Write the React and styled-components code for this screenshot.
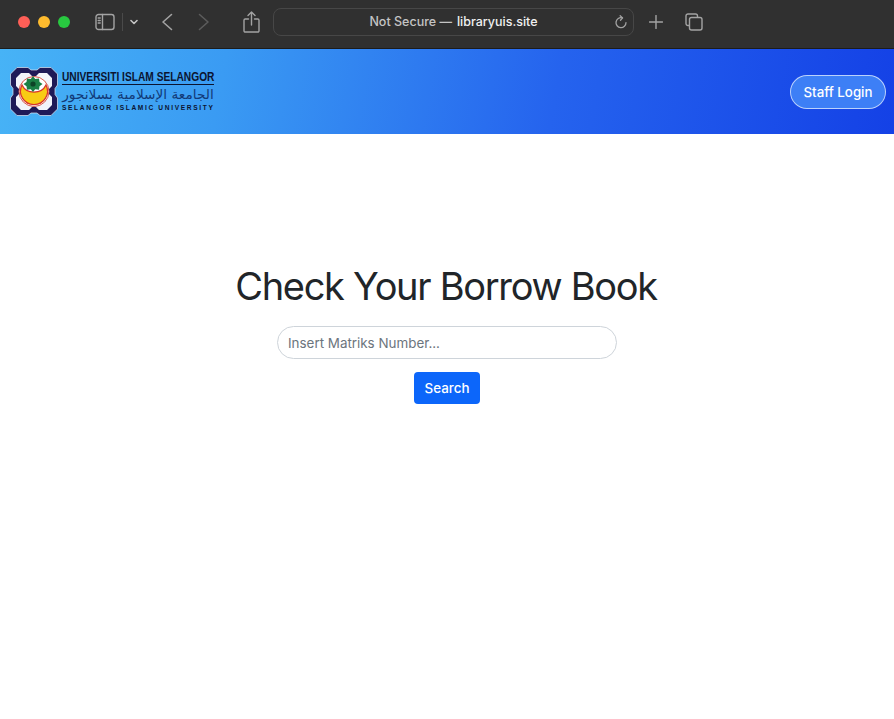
import React from 'react'
import styled, { createGlobalStyle } from 'styled-components'

const GlobalStyle = createGlobalStyle`
  html, body {
    margin: 0;
    padding: 0;
    background: #fff;
    font-family: Inter, "Liberation Sans", sans-serif;
  }
  * {
    box-sizing: border-box;
  }
`

const Page = styled.div`
  width: 894px;
  height: 719px;
  overflow: hidden;
  background: #fff;
`

const Chrome = styled.div`
  display: flex;
  align-items: center;
  height: 49px;
  padding: 0 0 5px 18px;
  background: #303030;
  border-bottom: 1px solid #1c1c1c;
`

const Lights = styled.div`
  display: flex;
  gap: 8px;
  margin-right: 25px;
`

const Light = styled.span`
  width: 12px;
  height: 12px;
  border-radius: 50%;
  background: ${props => props.color};
`

const Divider = styled.span`
  width: 1px;
  height: 18px;
  margin: 0 7px 0 7px;
  background: #4a4a4a;
`

const ChromeIcon = styled.svg`
  display: block;
  flex: none;
  margin-left: ${props => props.$left || 0}px;
  fill: none;
  stroke: ${props => props.$dim ? '#5c5c5c' : '#a3a3a3'};
  stroke-width: 1.4;
  stroke-linecap: round;
  stroke-linejoin: round;
`

const UrlBar = styled.div`
  position: relative;
  display: flex;
  align-items: center;
  justify-content: center;
  width: 361px;
  height: 28px;
  margin-left: 13px;
  border: 1px solid #474747;
  border-radius: 8px;
  font-size: 12.5px;
  font-weight: 500;
  color: #c4c4c4;
`

const Host = styled.span`
  margin-left: 5px;
  color: #f0f0f0;
`

const Reload = styled.svg`
  position: absolute;
  right: 5px;
  top: 6px;
  fill: none;
  stroke: #a3a3a3;
  stroke-width: 1.3;
  stroke-linecap: round;
  stroke-linejoin: round;
`

const Header = styled.header`
  display: flex;
  align-items: center;
  justify-content: space-between;
  height: 85px;
  padding: 0 8px 0 10px;
  background: linear-gradient(100deg, #47b3f6 0%, #3a9bf3 25%, #2563ee 62%, #1441e6 100%);
`

const Logo = styled.div`
  display: flex;
  align-items: center;
  gap: 4px;
`

const LogoText = styled.div`
  display: flex;
  flex-direction: column;
  width: 152px;
  color: #0b1430;
`

const LogoTitle = styled.div`
  height: 13px;
  border-bottom: 1px solid #0b1430;
  font-family: "Liberation Sans", sans-serif;
  font-size: 12.6px;
  line-height: 11px;
  font-weight: 700;
  white-space: nowrap;
`

const LogoTitleText = styled.span`
  display: inline-block;
  transform: scaleX(0.81);
  transform-origin: left center;
`

const LogoArabic = styled.div`
  height: 19px;
  font-family: "DejaVu Sans", sans-serif;
  font-size: 13.7px;
  line-height: 18px;
  color: #123a78;
  text-align: center;
  white-space: nowrap;
`

const LogoEnglish = styled.div`
  font-family: "Liberation Sans", sans-serif;
  font-size: 6.6px;
  line-height: 8px;
  font-weight: 700;
  letter-spacing: 1.66px;
  white-space: nowrap;
`

const LoginButton = styled.button`
  width: 96px;
  height: 34px;
  padding: 0;
  border: 1px solid rgba(255, 255, 255, 0.65);
  border-radius: 17px;
  background: #3d7ff6;
  color: #fff;
  font-family: inherit;
  font-size: 13.3px;
  font-weight: 500;
`

const Main = styled.main`
  display: flex;
  flex-direction: column;
  align-items: center;
  padding-top: 128px;
`

const Title = styled.h1`
  margin: 0 2px 16px 0;
  font-size: 38px;
  line-height: 48px;
  font-weight: 400;
  letter-spacing: -1.3px;
  color: #212529;
`

const SearchInput = styled.input`
  width: 340px;
  height: 33px;
  padding: 0 10px;
  border: 1px solid #ced4da;
  border-radius: 17px;
  outline: none;
  font-family: inherit;
  font-size: 13.4px;
  color: #212529;
  &::placeholder {
    color: #6c757d;
    opacity: 1;
  }
`

const SearchButton = styled.button`
  width: 66px;
  height: 32px;
  margin-top: 13px;
  padding: 0;
  border: none;
  border-radius: 4px;
  background: #0c66fa;
  color: #fff;
  font-family: inherit;
  font-size: 13.4px;
  font-weight: 500;
`

const star = 'M23 9 L25.2 12 L29 11.5 L29.5 15 L32.5 17 L29.5 19.2 L29 22.7 L25.2 22.2 L23 25 L20.8 22.2 L17 22.7 L16.5 19.2 L13.5 17 L16.5 15 L17 11.5 L20.8 12 Z'

const Emblem = () => (
  <svg width="48" height="49" viewBox="0 0 48 49">
    <path
      d="M7 0.5 H18 L21 3 H27 L30 0.5 H41 L47.5 7 V18 L45 21.5 V27.5 L47.5 31 V42 L41 48.5 H30 L27 46 H21 L18 48.5 H7 L0.5 42 V31 L3 27.5 V21.5 L0.5 18 V7 Z"
      fill="#1f1a57"
      stroke="#dfe6f2"
      strokeWidth="0.7"
      strokeLinejoin="round"
    />
    <path
      d="M11 6 H19 L22 9 H26 L29 6 H37 L42 11 V19 L39 22 V27 L42 30 V38 L37 43 H29 L26 40 H22 L19 43 H11 L6 38 V30 L9 27 V22 L6 19 V11 Z"
      fill="#f2f4fa"
    />
    <circle cx="24" cy="24.5" r="15" fill="#ffffff" stroke="#d8574a" strokeWidth="1" />
    <path
      d="M12 18 A13.5 13.5 0 1 0 36 18 A13 11.5 0 0 1 12 18 Z"
      fill="#f8cc14"
      stroke="#d8352b"
      strokeWidth="1.3"
    />
    <path d={star} fill="#1b7f45" />
    <circle cx="23" cy="17" r="2.6" fill="#0d4326" />
  </svg>
)

const App = () => (
  <Page>
    <GlobalStyle />
    <Chrome>
      <Lights>
        <Light color="#fe5f57" />
        <Light color="#febb2e" />
        <Light color="#28c840" />
      </Lights>
      <ChromeIcon width="20" height="18" viewBox="0 0 20 18">
        <rect x="1" y="1.5" width="18" height="15" rx="2.5" />
        <path d="M7.5 1.5V16.5M3.2 5h2M3.2 7.5h2M3.2 10h2" />
      </ChromeIcon>
      <Divider />
      <ChromeIcon width="8" height="6" viewBox="0 0 8 6" style={{ strokeWidth: 1.6, stroke: '#c4c4c4' }}>
        <path d="M1 1.5L4 4.5L7 1.5" />
      </ChromeIcon>
      <ChromeIcon $left={23} width="12" height="18" viewBox="0 0 12 18" style={{ strokeWidth: 1.6 }}>
        <path d="M10.5 1.5L2 9L10.5 16.5" />
      </ChromeIcon>
      <ChromeIcon $left={25} $dim width="12" height="18" viewBox="0 0 12 18" style={{ strokeWidth: 1.6 }}>
        <path d="M1.5 1.5L10 9L1.5 16.5" />
      </ChromeIcon>
      <ChromeIcon $left={33} width="17" height="22" viewBox="0 0 17 22">
        <path d="M5.5 8H2.2A1.2 1.2 0 0 0 1 9.2V19.8A1.2 1.2 0 0 0 2.2 21H14.8A1.2 1.2 0 0 0 16 19.8V9.2A1.2 1.2 0 0 0 14.8 8H11.5" />
        <path d="M8.5 14V1.5M5 4.5L8.5 1L12 4.5" />
      </ChromeIcon>
      <UrlBar>
        Not Secure —<Host>libraryuis.site</Host>
        <Reload width="14" height="15" viewBox="0 0 14 15">
          <path d="M8.2 2.8A5 5 0 1 0 12 7.6" />
          <path d="M6.2 0.8L8.6 2.9L6.5 5.2" />
        </Reload>
      </UrlBar>
      <ChromeIcon $left={15} width="14" height="14" viewBox="0 0 14 14">
        <path d="M7 0.5V13.5M0.5 7H13.5" />
      </ChromeIcon>
      <ChromeIcon $left={22} width="18" height="18" viewBox="0 0 18 18">
        <path d="M4 12.5H3A2 2 0 0 1 1 10.5V3A2 2 0 0 1 3 1H10.5A2 2 0 0 1 12.5 3V4" />
        <rect x="4.5" y="4.5" width="12.5" height="12.5" rx="2" />
      </ChromeIcon>
    </Chrome>
    <Header>
      <Logo>
        <Emblem />
        <LogoText>
          <LogoTitle><LogoTitleText>UNIVERSITI ISLAM SELANGOR</LogoTitleText></LogoTitle>
          <LogoArabic dir="rtl" lang="ar">الجامعة الإسلامية بسلانجور</LogoArabic>
          <LogoEnglish>SELANGOR ISLAMIC UNIVERSITY</LogoEnglish>
        </LogoText>
      </Logo>
      <LoginButton>Staff Login</LoginButton>
    </Header>
    <Main>
      <Title>Check Your Borrow Book</Title>
      <SearchInput placeholder="Insert Matriks Number..." />
      <SearchButton>Search</SearchButton>
    </Main>
  </Page>
)

export default App
